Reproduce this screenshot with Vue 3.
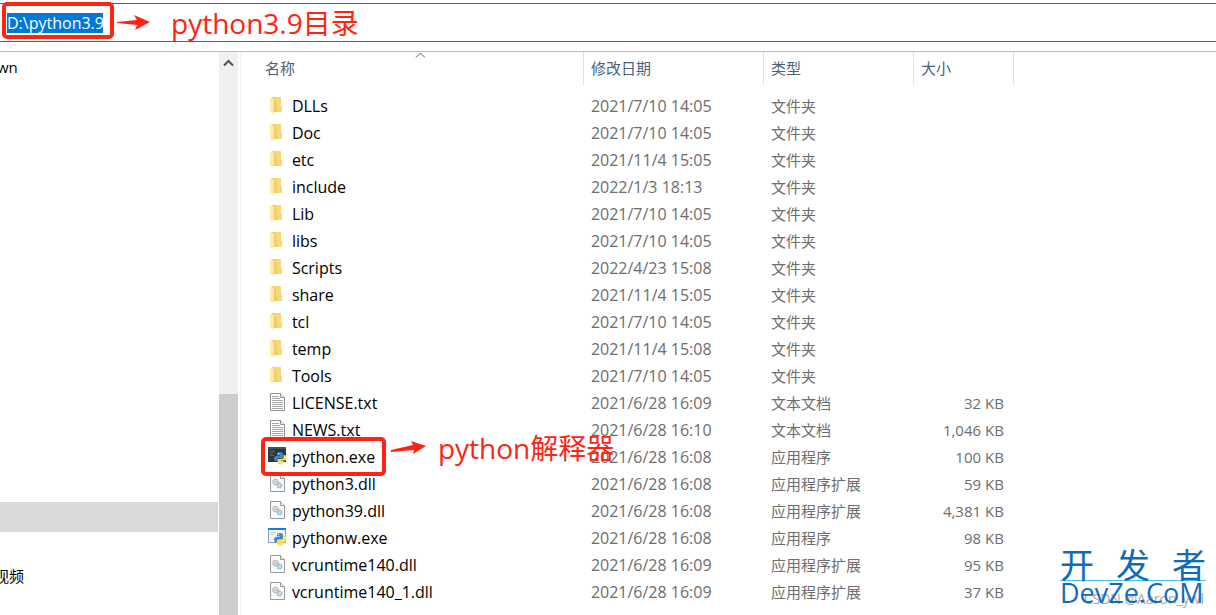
<script setup>
import { ref } from 'vue'

const path = ref('D:\\python3.9')

const files = [
  ['DLLs', '2021/7/10 14:05', '文件夹', '', 'folder'],
  ['Doc', '2021/7/10 14:05', '文件夹', '', 'folder'],
  ['etc', '2021/11/4 15:05', '文件夹', '', 'folder'],
  ['include', '2022/1/3 18:13', '文件夹', '', 'folder'],
  ['Lib', '2021/7/10 14:05', '文件夹', '', 'folder'],
  ['libs', '2021/7/10 14:05', '文件夹', '', 'folder'],
  ['Scripts', '2022/4/23 15:08', '文件夹', '', 'folder'],
  ['share', '2021/11/4 15:05', '文件夹', '', 'folder'],
  ['tcl', '2021/7/10 14:05', '文件夹', '', 'folder'],
  ['temp', '2021/11/4 15:08', '文件夹', '', 'folder'],
  ['Tools', '2021/7/10 14:05', '文件夹', '', 'folder'],
  ['LICENSE.txt', '2021/6/28 16:09', '文本文档', '32 KB', 'text'],
  ['NEWS.txt', '2021/6/28 16:10', '文本文档', '1,046 KB', 'text'],
  ['python.exe', '2021/6/28 16:08', '应用程序', '100 KB', 'console'],
  ['python3.dll', '2021/6/28 16:08', '应用程序扩展', '59 KB', 'dll'],
  ['python39.dll', '2021/6/28 16:08', '应用程序扩展', '4,381 KB', 'dll'],
  ['pythonw.exe', '2021/6/28 16:08', '应用程序', '98 KB', 'window'],
  ['vcruntime140.dll', '2021/6/28 16:09', '应用程序扩展', '95 KB', 'dll'],
  ['vcruntime140_1.dll', '2021/6/28 16:09', '应用程序扩展', '37 KB', 'dll'],
].map(([name, date, type, size, icon]) => ({ name, date, type, size, icon }))
</script>

<template>
  <div class="explorer">
    <header class="address">
      <input v-model="path" class="path" aria-label="地址" size="9" spellcheck="false" />
      <span class="frame path-frame"></span>
      <div class="note path-note">
        <svg class="arrow" width="34" height="20" viewBox="0 0 34 20" aria-hidden="true">
          <path d="M0 9L20 7L17 2L33 9L18 17L20 12L0 10Z" fill="#ff2315" />
        </svg>
        <span>python3.9目录</span>
      </div>
    </header>

    <div class="body">
      <nav class="tree">
        <a href="#" class="node first">wn</a>
        <a href="#" class="node selected" aria-label="D:"></a>
        <a href="#" class="node video">视频</a>
      </nav>
      <div class="scroll">
        <button class="up" aria-label="向上滚动">
          <svg width="11" height="8" viewBox="0 0 11 8"><path d="M1 6.5L5.5 2L10 6.5" fill="none" stroke="#505050" stroke-width="2" /></svg>
        </button>
        <div class="thumb"></div>
      </div>

      <main class="list">
        <table>
          <colgroup>
            <col class="c-name" /><col class="c-date" /><col class="c-type" /><col class="c-size" />
          </colgroup>
          <thead>
            <tr>
              <th>
                名称
                <svg class="sort" width="11" height="6" viewBox="0 0 11 6" aria-hidden="true"><path d="M1 5.5L5.5 1L10 5.5" fill="none" stroke="#606060" /></svg>
              </th>
              <th>修改日期</th>
              <th>类型</th>
              <th>大小</th>
            </tr>
          </thead>
          <tbody>
            <tr v-for="f in files" :key="f.name">
              <td class="name">
                <div class="entry">
                  <svg class="icon" width="20" height="21" viewBox="0 0 20 21" aria-hidden="true">
                    <g v-if="f.icon === 'folder'">
                      <path d="M5 1H14V10H15V16H5Z" fill="#f1cd69" />
                      <path d="M8 1H14V10H15V16H11Z" fill="#f7d978" />
                      <path d="M3 1L7 3V14L6 18L3 16Z" fill="#ffe9a6" />
                    </g>
                    <g v-else-if="f.icon === 'text'">
                      <path d="M3.5 .5H13.5L17.5 4.5V17.5H3.5Z" fill="#fff" stroke="#929292" />
                      <path d="M13.5 .5V4.5H17.5" fill="#eee" stroke="#929292" />
                      <path d="M5 3.5H12M5 5.5H13M5 7.5H16M5 9.5H16M5 11.5H16M5 13.5H16M5 15.5H16" stroke="#a5a5a5" />
                    </g>
                    <g v-else-if="f.icon === 'dll'">
                      <path d="M3.5 .5H13.5L17.5 4.5V17.5H3.5Z" fill="#fafafa" stroke="#999" />
                      <path d="M13.5 .5V4.5H17.5" fill="#eee" stroke="#999" />
                      <circle cx="8.5" cy="8" r="2.600" fill="none" stroke="#9a9fa3" stroke-width="1.200" stroke-dasharray="1.5 .6" />
                      <circle cx="8.5" cy="8" r="1" fill="none" stroke="#8f969b" stroke-width=".6" />
                      <circle cx="12.5" cy="11.5" r="2.300" fill="#eef5fa" stroke="#79a5c5" stroke-width="1.200" stroke-dasharray="1.3 .6" />
                      <circle cx="12.5" cy="11.5" r=".9" fill="#fff" stroke="#79a5c5" stroke-width=".6" />
                    </g>
                    <g v-else>
                      <template v-if="f.icon === 'console'">
                        <rect x="1" y="0" width="18" height="15" fill="#2c363b" />
                        <rect x="1" y="0" width="18" height="2" fill="#40535e" />
                        <path d="M3 4.5H8M3 6.5H6M3 8.5H7" stroke="#48735a" />
                      </template>
                      <template v-else>
                        <rect x="1.5" y=".5" width="17" height="14" fill="#f2f6f9" stroke="#8ba2b3" />
                        <rect x="1" y="0" width="18" height="2" fill="#187fc4" />
                        <path d="M3 4.5H9M3 6.5H7" stroke="#c5ced4" />
                      </template>
                      <path d="M10 6.5Q10 5 13 5Q16 5 16 7V10Q16 11.500 14.500 11.500H11.500Q10 11.500 10 13V14H8.500Q7 14 7 11.500Q7 9 9 9H13V8.500H10Z" fill="#3f88c0" />
                      <path d="M16.500 8H17.500Q19.500 8 19.500 11Q19.500 13.500 17.500 13.500H14V14H16.500V15.500Q16.500 17.500 13.500 17.500Q10.500 17.500 10.500 15.500V13Q10.500 12 12 12H15Q16.500 12 16.500 10Z" fill="#ffdc52" />
                      <circle cx="11.500" cy="6.700" r=".6" fill="#fff" />
                      <circle cx="15" cy="15.800" r=".6" fill="#fff" />
                    </g>
                  </svg>
                  <span>{{ f.name }}</span>
                  <template v-if="f.icon === 'console'">
                    <span class="frame exe-frame"></span>
                    <div class="note exe-note">
                      <svg class="arrow" width="36" height="20" viewBox="0 0 36 20" aria-hidden="true">
                        <path d="M0 12L22 7L20 3L35 8L22 16L23 12L0 14Z" fill="#ff2315" />
                      </svg>
                      <span>python解释器</span>
                    </div>
                  </template>
                </div>
              </td>
              <td>{{ f.date }}</td>
              <td class="type">{{ f.type }}</td>
              <td class="size">{{ f.size }}</td>
            </tr>
          </tbody>
        </table>
      </main>
    </div>

    <div class="author">CSDN @Aaron_ywl</div>
    <div class="brand">
      <div class="brand-cn"><span>开</span><span>发</span><span>者</span></div>
      <div class="brand-en">DevZe.CoM</div>
    </div>
  </div>
</template>

<style>
body { background: #fff; }
</style>

<style scoped>
.explorer {
  position: relative;
  display: flex;
  flex-direction: column;
  height: 100vh;
  overflow: hidden;
  box-sizing: border-box;
  padding-top: 3px;
  font-family: "Open Sans", "Noto Sans CJK SC", sans-serif;
  font-size: 15px;
  color: #000;
}
.address {
  position: relative;
  display: flex;
  align-items: center;
  flex: none;
  height: 37px;
  margin-bottom: 9px;
  padding-left: 7px;
  border-top: 1px solid #0078d7;
  border-bottom: 1px solid #0078d7;
}
.path {
  width: 96px;
  height: 20px;
  box-sizing: border-box;
  margin: 0;
  padding: 0;
  border: 0;
  outline: 0;
  background: #0078d7;
  color: #fff;
  font: inherit;
  font-size: 16px;
}
.frame {
  position: absolute;
  box-sizing: border-box;
  border: 4px solid #ff2315;
  border-radius: 5px;
}
.path-frame { left: 2px; top: -2px; width: 112px; height: 37px; }
.note {
  position: absolute;
  display: flex;
  align-items: center;
  height: 40px;
  color: #ff2315;
  font-size: 28px;
  line-height: 40px;
  white-space: nowrap;
}
.arrow { flex: none; }
.path-note { left: 117px; top: -1px; gap: 20px; }
.body {
  display: flex;
  flex: 1;
  min-height: 0;
  border-top: 1px solid #bcbcbc;
}
.tree {
  width: 18%;
  flex: none;
  display: flex;
  flex-direction: column;
  overflow: hidden;
}
.node {
  flex: none;
  height: 30px;
  line-height: 30px;
  color: #000;
  text-decoration: none;
  white-space: nowrap;
}
.first { margin: 0 0 0 -3px; }
.selected { margin: 420px 1px 0 0; background: #d9d9d9; }
.video { margin: 29px 0 0 -6px; }
.scroll {
  width: 19px;
  flex: none;
  display: flex;
  flex-direction: column;
  background: #f0f0f0;
}
.up {
  display: flex;
  justify-content: center;
  align-items: center;
  height: 21px;
  margin: 0 0 321px;
  padding: 0;
  border: 0;
  background: none;
}
.thumb { flex: 1; background: #cdcdcd; }
.list {
  flex: 1;
  margin-left: 2px;
  border-left: 1px solid #f3f3f3;
  overflow: hidden;
}
table {
  width: 773px;
  table-layout: fixed;
  border-collapse: separate;
  border-spacing: 0;
}
.c-name { width: 343px; }
.c-date { width: 180px; }
.c-type { width: 150px; }
.c-size { width: 100px; }
th {
  position: relative;
  height: 33px;
  padding: 0 0 0 7px;
  border-right: 1px solid #e2e2e2;
  color: #4c607a;
  font-weight: 400;
  text-align: left;
  line-height: 33px;
}
th:first-child { padding-left: 24px; }
.sort { position: absolute; left: 174px; top: 0; }
tbody::before { content: ""; display: block; height: 8px; }
td {
  height: 27px;
  padding: 0 0 0 7px;
  color: #6d6d6d;
  font-size: 16px;
  line-height: 27px;
  white-space: nowrap;
}
.name { padding-left: 26px; color: #000; }
.type { font-size: 15px; }
.size { padding: 0 10px 0 0; text-align: right; font-size: 15px; }
.entry {
  position: relative;
  display: flex;
  align-items: center;
  gap: 5px;
  height: 27px;
}
.icon { flex: none; }
.exe-frame { left: -6px; top: -7px; width: 125px; height: 39px; z-index: 1; }
.exe-note { left: 124px; top: -16px; gap: 11px; z-index: 1; }
.author {
  position: absolute;
  right: 12px;
  bottom: 6px;
  color: #a8a8a8;
  font-size: 14px;
  line-height: 20px;
}
.brand {
  position: absolute;
  right: 10px;
  bottom: 6px;
  width: 146px;
  color: #0d6cbd;
}
.brand-cn {
  display: flex;
  justify-content: space-between;
  height: 32px;
  border-bottom: 1px solid #45c3f0;
  font-size: 34px;
  line-height: 34px;
}
.brand-en {
  height: 28px;
  font-size: 27px;
  font-weight: 500;
  line-height: 24px;
}
</style>
